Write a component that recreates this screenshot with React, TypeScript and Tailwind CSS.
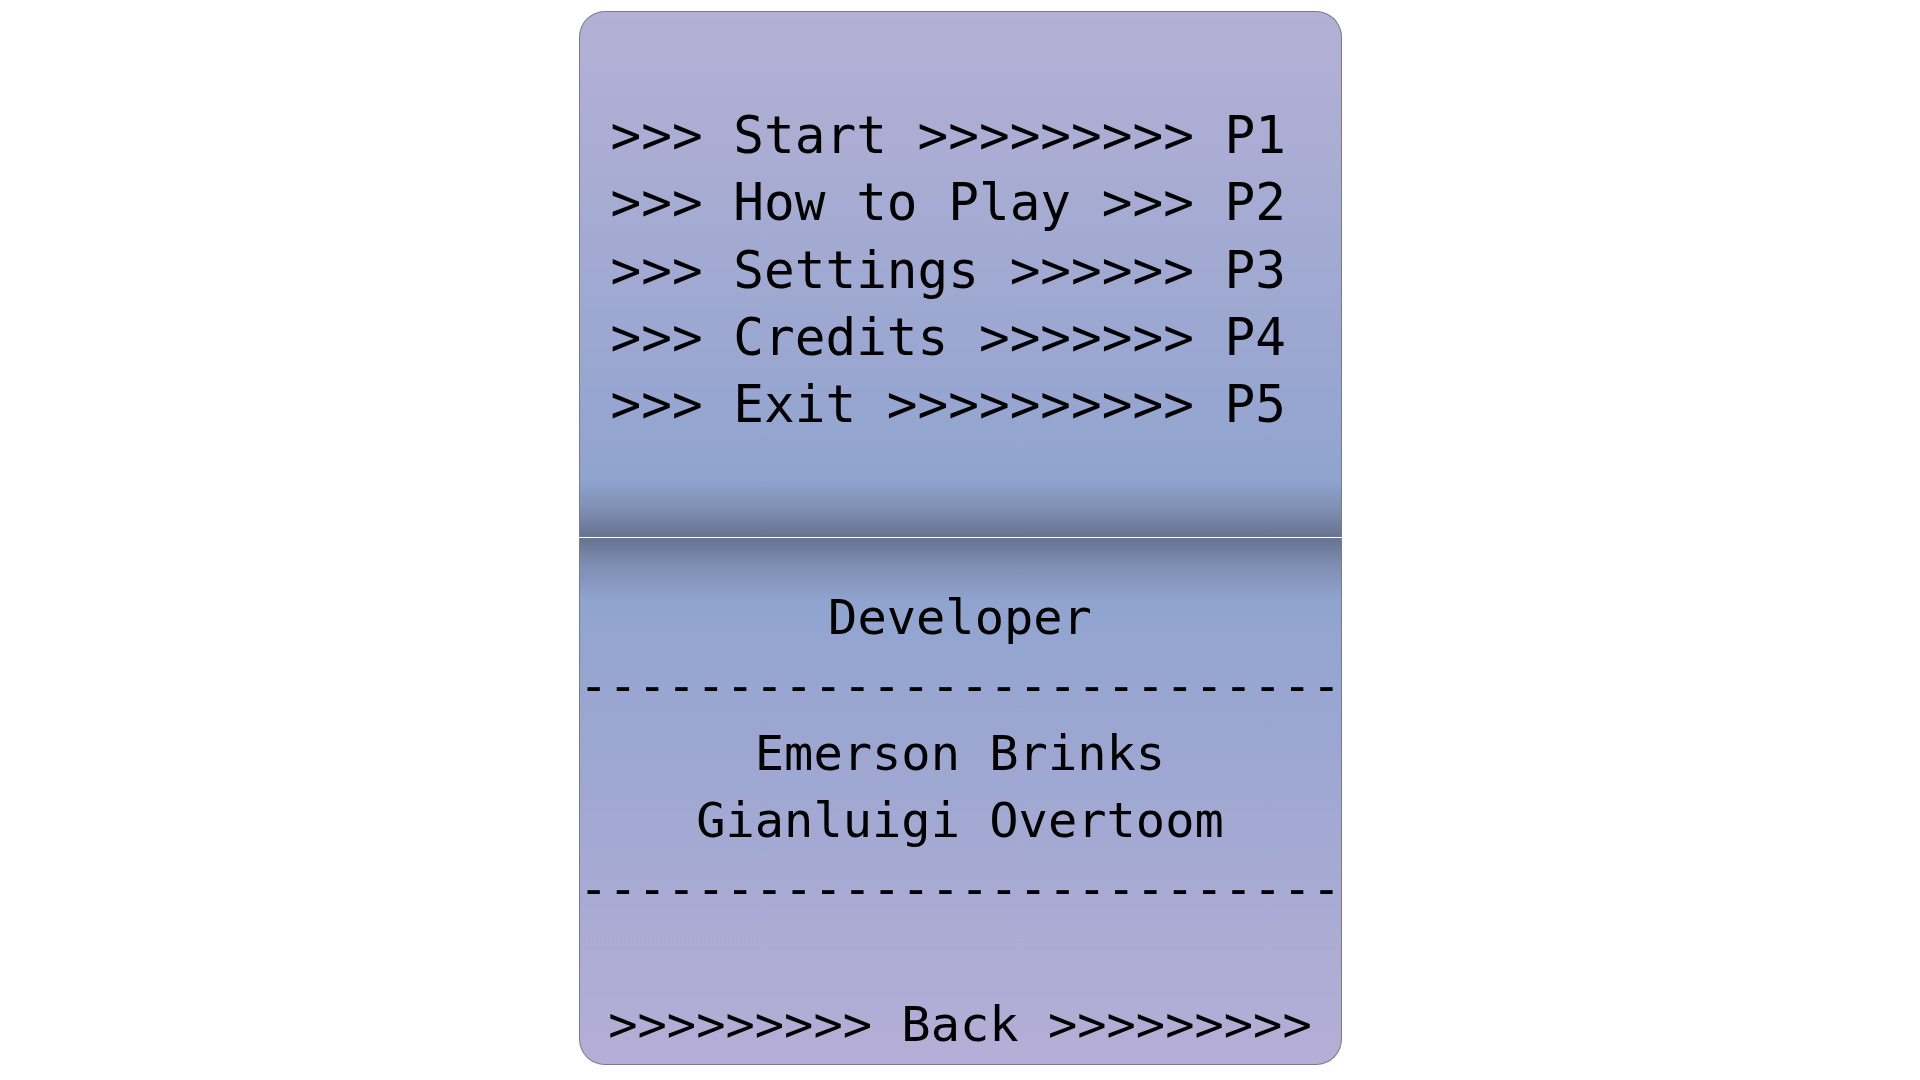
const menuLines = [
  '>>> Start >>>>>>>>> P1',
  '>>> How to Play >>> P2',
  '>>> Settings >>>>>> P3',
  '>>> Credits >>>>>>> P4',
  '>>> Exit >>>>>>>>>> P5',
];

const dashes = '-'.repeat(26);

export default function App() {
  return (
    <div className="flex h-[1080px] w-full justify-center bg-white pt-[11px] font-['DejaVu_Sans_Mono',monospace] text-black">
      <div className="flex h-[1054px] w-[763px] flex-col gap-px">
        {/* menu panel */}
        <section className="h-[526px] rounded-t-[26px] border-x border-t border-[#767a93] bg-[linear-gradient(to_bottom,#b5b0d5_0%,#90a4cf_89%,#7e8db2_95%,#66728f_100%)] pl-[31px] pt-[90px]">
          {menuLines.map((line) => (
            <div key={line} className="whitespace-pre text-[51px] leading-[67.3px]">
              {line}
            </div>
          ))}
        </section>

        {/* credits panel */}
        <section className="flex h-[527px] flex-col items-center rounded-b-[26px] border-x border-b border-[#767a93] bg-[linear-gradient(to_bottom,#66738f_0%,#7e8db2_5%,#90a4cf_12%,#b6aed6_100%)] pt-[46px] text-[48.7px] leading-[67.8px]">
          <div className="whitespace-pre">Developer</div>
          <div className="whitespace-pre">{dashes}</div>
          <div className="whitespace-pre">Emerson Brinks</div>
          <div className="whitespace-pre">Gianluigi Overtoom</div>
          <div className="whitespace-pre">{dashes}</div>
          <div className="whitespace-pre">&nbsp;</div>
          <div className="whitespace-pre">{'>>>>>>>>> Back >>>>>>>>>'}</div>
        </section>
      </div>
    </div>
  );
}
